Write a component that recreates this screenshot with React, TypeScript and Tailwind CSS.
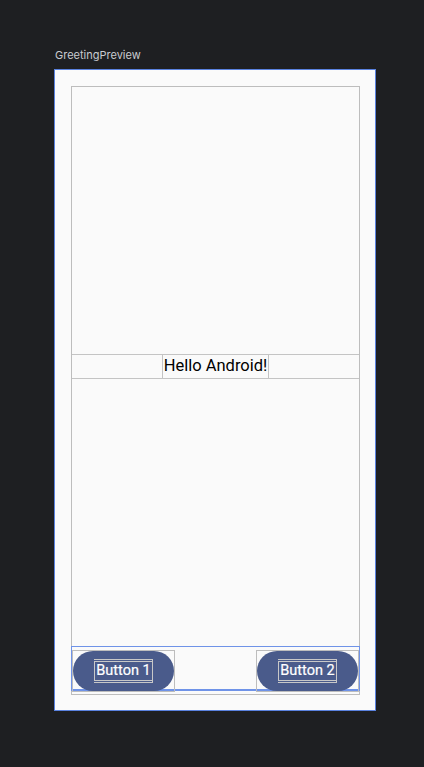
import React from "react";

function PreviewButton({ label }: { label: string }) {
  return (
    <div className="w-[103px] h-[42px] border border-[#bdbdbd] flex">
      <div className="flex-1 rounded-full bg-[#4a5b8b] flex items-center justify-center">
        <div className="h-[24px] px-[1px] border-y-[3px] border-double border-x border-[#c8c8c8] flex items-center">
          <span className="text-white text-[14.5px] font-normal leading-none [-webkit-text-stroke:0.2px_white]">{label}</span>
        </div>
      </div>
    </div>
  );
}

export default function App() {
  return (
    <div
      className="min-h-screen bg-[#1e1f22] pl-[54px] pt-[47px]"
      style={{ fontFamily: "Roboto, 'Liberation Sans', sans-serif" }}
    >
      <div className="h-[22px] pl-[1px] text-[11px] leading-[16px] text-[#c9cbd0]" style={{ fontFamily: "Inter, 'Liberation Sans', sans-serif" }}>
        GreetingPreview
      </div>
      <div className="w-[322px] h-[642px] border border-[#5a82e0] bg-[#fafafa] pt-[16px] pl-[16px]">
        <div className="w-[289px] h-[609px] border border-[#bdbdbd] flex flex-col">
          <div className="flex-1" />
          <div className="h-[25px] border-y border-[#c4c4c4] flex justify-center">
            <div className="h-full px-[1px] border-x border-[#c4c4c4] flex items-center">
              <span className="text-[16.5px] leading-none text-black">Hello Android!</span>
            </div>
          </div>
          <div className="flex-1" />
          <div className="h-[45px] -mx-px border-t border-b-2 border-x border-[#6f93e8] flex justify-between items-start pt-[3px]">
            <PreviewButton label="Button 1" />
            <PreviewButton label="Button 2" />
          </div>
          <div className="h-[3px]" />
        </div>
      </div>
    </div>
  );
}
